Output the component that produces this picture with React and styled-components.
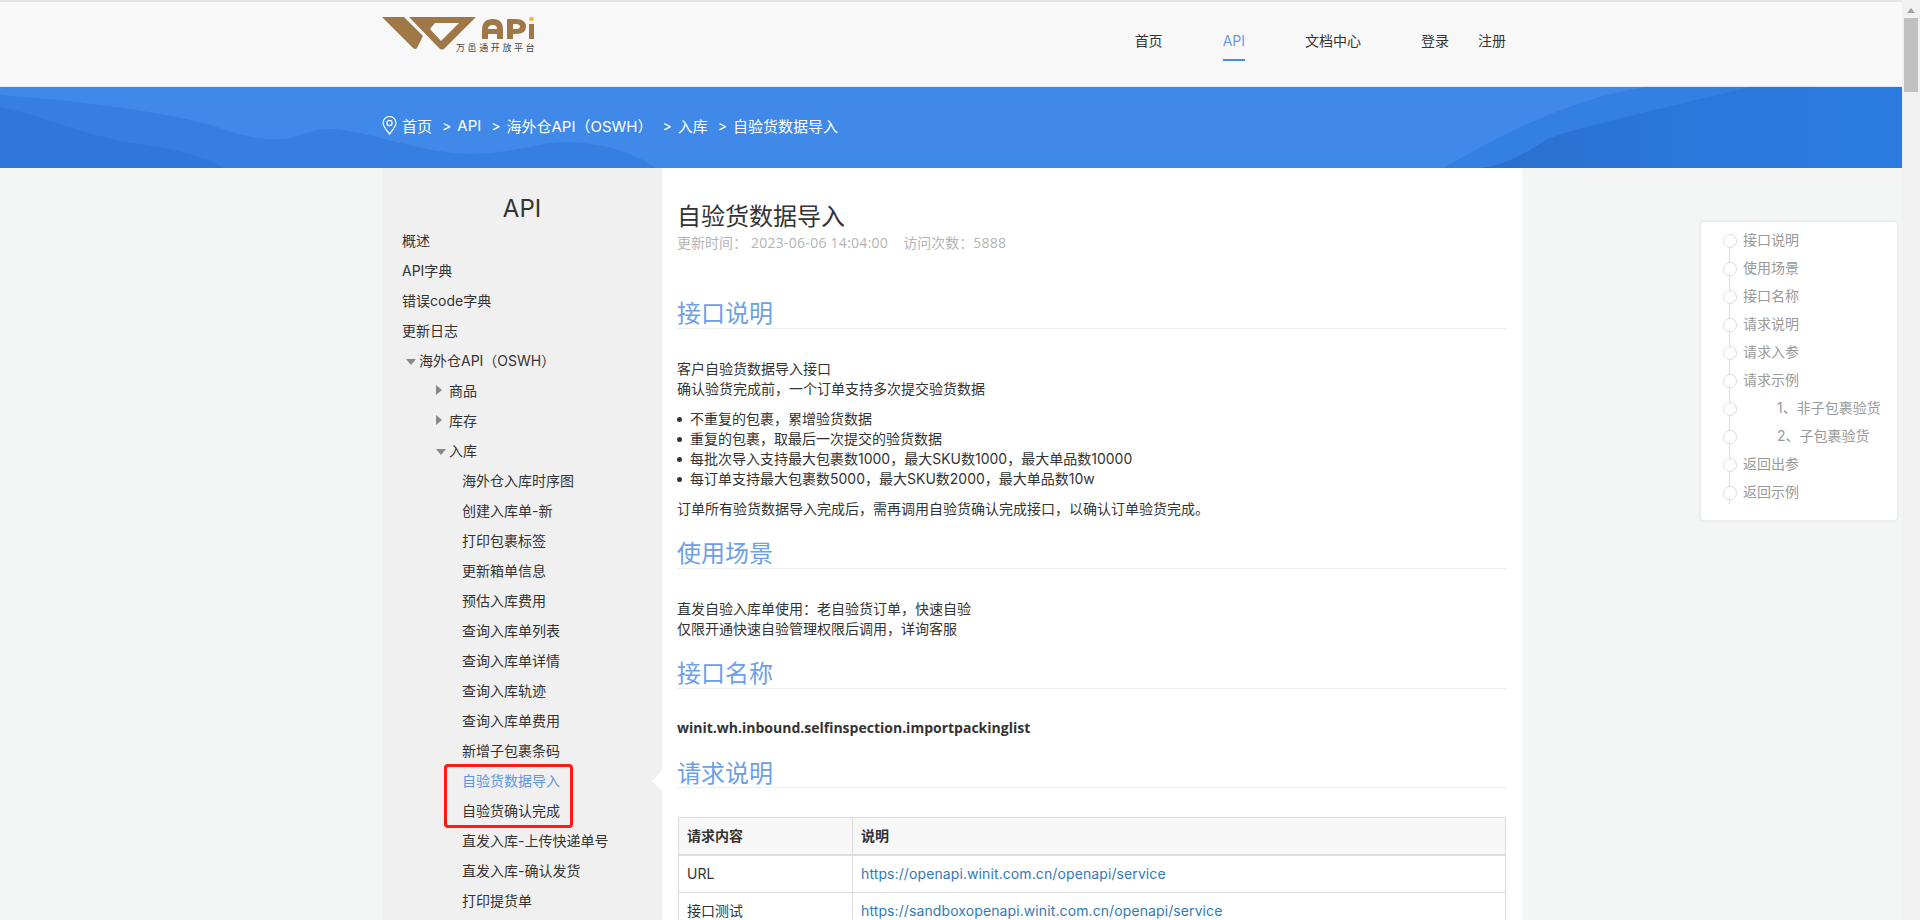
import React from "react";
import styled, { createGlobalStyle } from "styled-components";

const FONT = `Inter, "Noto Sans CJK SC", sans-serif`;
const OPEN = `"Open Sans", "Noto Sans CJK SC", sans-serif`;

const Global = createGlobalStyle`
  html, body { margin: 0; padding: 0; height: 920px; overflow: hidden; background: #f4f6f6; }
  body { font-family: ${FONT}; font-size: 14px; color: #333; }
  * { box-sizing: border-box; }
`;

const Shell = styled.div`display:flex;height:920px;width:1920px;overflow:hidden;`;
const Page = styled.div`flex:1;min-width:0;height:920px;overflow:hidden;`;
const ScrollTrack = styled.div`width:18px;height:920px;background:#f1f1f1;display:flex;flex-direction:column;align-items:center;padding-top:8px;`;
const ScrollArrow = styled.div`width:0;height:0;border-left:4px solid transparent;border-right:4px solid transparent;border-bottom:5px solid #a3a3a3;`;
const ScrollThumb = styled.div`width:14px;height:74px;margin-top:5px;background:#c1c1c1;`;

const Header = styled.header`height:87px;background:#f8f8f8;border-top:2px solid #e4e4e4;border-bottom:1px solid #e6e6e6;`;
const Wrap = styled.div`width:1140px;margin:0 auto;transform:translateX(1px);`;
const HeaderInner = styled(Wrap)`display:flex;justify-content:space-between;height:84px;`;
const LogoBox = styled.div`position:relative;width:160px;height:84px;`;
const LogoArt = styled.svg`position:absolute;left:0;top:15px;`;
const LogoText = styled.span`position:absolute;left:74px;top:40px;font-size:9px;letter-spacing:2.6px;white-space:nowrap;color:#444;line-height:11px;`;
const Nav = styled.nav`display:flex;gap:60px;padding-right:16px;`;
const NavLink = styled.a`position:relative;height:58px;line-height:77px;color:${p=>p.$active?"#6b9be8":"#333"};`;
const NavUnder = styled.i`position:absolute;left:0;right:0;top:57px;height:2px;background:#4a8be4;`;
const AuthLinks = styled.div`display:flex;gap:29px;`;

const Banner = styled.div`position:relative;height:81px;background:#4089e8;overflow:hidden;`;
const BannerArt = styled.svg`position:absolute;left:0;top:0;width:100%;height:100%;`;
const Crumbs = styled(Wrap)`position:relative;display:flex;align-items:center;height:76px;color:#fff;font-size:15px;`;
const PinIcon = styled.svg`width:15px;height:19px;margin-right:5px;`;
const Crumb = styled.span`white-space:pre;`;
const Sep = styled.span`margin:0 6px 0 10px;font-size:14px;`;

const Body = styled(Wrap)`display:flex;position:relative;height:760px;`;
const Side = styled.aside`position:relative;width:280px;background:#f0f0f0;padding:19px 0 0 20px;`;
const SideTitle = styled.h3`margin:0 0 0 -20px;height:37.5px;line-height:44px;font-size:24px;font-weight:400;text-align:center;color:#333;`;
const Item = styled.div`
  display:flex;align-items:center;height:30px;white-space:nowrap;
  padding-left:${p=>p.$indent||0}px;
  color:${p=>p.$active?"#5d95e6":"#333"};
`;
const Tri = styled.i`
  width:0;height:0;margin-right:${p=>p.$mr||0}px;
  ${p=>p.$open
    ?`border-left:5px solid transparent;border-right:5px solid transparent;border-top:6px solid #888;margin-top:4px;`
    :`border-top:5px solid transparent;border-bottom:5px solid transparent;border-left:6px solid #888;`}
`;
const ActiveArrow = styled.i`position:absolute;right:0;top:603px;width:0;height:0;border-top:10px solid transparent;border-bottom:10px solid transparent;border-right:10px solid #fff;`;
const RedMark = styled.div`position:absolute;left:62px;top:596px;width:129px;height:64px;border:3px solid #ff1a12;border-radius:4px;`;

const Main = styled.main`width:860px;background:#fff;padding:32px 16px 0 15px;overflow:hidden;`;
const Title = styled.h1`margin:0;font-size:24px;font-weight:400;line-height:34px;color:#333;`;
const Meta = styled.div`display:flex;gap:15px;line-height:20px;margin-top:-1px;color:#b4b4b4;white-space:pre;`;
const MetaNum = styled.span`font-family:${OPEN};letter-spacing:.27px;`;
const H2 = styled.h2`margin:${p=>p.$mt||0}px 0 0;height:${p=>p.$h||36}px;line-height:42px;font-size:24px;font-weight:400;color:#6c9fe6;border-bottom:1px solid #eee;`;
const Para = styled.p`margin:${p=>p.$mt||0}px 0 0;line-height:20px;color:#333;`;
const Bold = styled(Para)`font-family:${OPEN};font-weight:700;`;
const List = styled.ul`margin:10px 0 0;padding:0 0 0 13px;list-style:none;`;
const Li = styled.li`position:relative;line-height:20px;&::before{content:"";position:absolute;left:-13px;top:8px;width:5px;height:5px;border-radius:50%;background:#333;}`;
const Table = styled.table`width:828px;margin:29px 0 0 1px;border-collapse:collapse;table-layout:fixed;`;
const Th = styled.th`height:37px;padding:8px;text-align:left;font-weight:700;background:#f7f7f7;border:1px solid #ddd;border-bottom:2px solid #ddd;line-height:20px;width:${p=>p.$w||"auto"};`;
const Td = styled.td`height:37px;padding:8px;border:1px solid #ddd;line-height:20px;`;
const LinkA = styled.a`color:#337ab7;letter-spacing:.1px;`;

const Toc = styled.div`position:absolute;left:1317px;top:52px;width:200px;height:302px;background:#fff;border:2px solid #ebedf2;border-radius:5px;padding:4px 0 0 28px;`;
const TocItem = styled.div`position:relative;height:28px;line-height:28px;padding-left:${p=>p.$sub?48:14}px;color:#999;white-space:nowrap;
  &::before{content:"";position:absolute;left:-6px;top:8px;width:12px;height:12px;border-radius:50%;background:#fff;border:1px solid #ddd;z-index:1;}
  &::after{content:"";position:absolute;left:0;top:20px;height:16px;width:1px;background:#ddd;}
  &:last-child::after{height:6px;}
`;

const leaf = ["海外仓入库时序图","创建入库单-新","打印包裹标签","更新箱单信息","预估入库费用","查询入库单列表","查询入库单详情","查询入库轨迹","查询入库单费用","新增子包裹条码","自验货数据导入","自验货确认完成","直发入库-上传快递单号","直发入库-确认发货","打印提货单"];
const toc = [["接口说明"],["使用场景"],["接口名称"],["请求说明"],["请求入参"],["请求示例"],["1、非子包裹验货",1],["2、子包裹验货",1],["返回出参"],["返回示例"]];

function Logo(){
  return (
    <LogoBox>
      <LogoArt width="160" height="36" viewBox="0 0 160 36">
        <g fill="#a07848" fillRule="evenodd">
          <path d="M0 0 H22 L41 19 L35 31 Q33 33 31 31 Z"/>
          <path d="M27 0 H94 L63 31 Q60 34 57 31 Z M53 6 H77 L59 24 L48 12 Z"/>
          <path d="M100 22 V13 Q100 2 111 2 Q121 2 121 13 V22 H115 V17 H106 V22 Z M106 12 H115 Q115 8 111 8 Q106 8 106 12 Z"/>
          <path d="M125 22 V2 H134 Q144 2 144 10 Q144 17 134 17 H131 V22 Z M131 7 V12 H134 Q138 12 138 9.5 Q138 7 134 7 Z"/>
          <rect x="147" y="7" width="5" height="15"/>
        </g>
        <rect x="147" y="0" width="5" height="4" rx="2" fill="#f5b93f"/>
      </LogoArt>
      <LogoText>万邑通开放平台</LogoText>
    </LogoBox>
  );
}

export default function App(){
  return (
    <>
      <Global/>
      <Shell>
        <Page>
          <Header>
            <HeaderInner>
              <Logo/>
              <Nav>
                <NavLink>首页</NavLink>
                <NavLink $active>API<NavUnder/></NavLink>
                <NavLink>文档中心</NavLink>
                <AuthLinks><NavLink>登录</NavLink><NavLink>注册</NavLink></AuthLinks>
              </Nav>
            </HeaderInner>
          </Header>
          <Banner>
            <BannerArt viewBox="0 0 1902 81" preserveAspectRatio="none">
              <defs>
                <linearGradient id="rightWave" x1="0" x2="1" y1="0" y2="0">
                  <stop offset="0" stopColor="#2a70cd"/>
                  <stop offset="0.55" stopColor="#2b78dc"/>
                  <stop offset="1" stopColor="#2b7be0"/>
                </linearGradient>
              </defs>
              <path d="M1444 81 Q1560 12 1646 0 H1902 V81 Z" fill="#3380e2"/>
              <path d="M1480 81 C1510 78 1530 62 1548 52 C1570 42 1660 22 1750 0 H1902 V81 Z" fill="url(#rightWave)"/>
              <path d="M0 8 C80 14 160 24 210 38 C240 48 262 54 285 52 C305 48 312 42 330 42 C370 44 420 66 470 67 C520 66 540 54 570 55 C610 58 635 66 655 81 H0 Z" fill="#367edf"/>
              <path d="M0 20 C40 28 80 46 120 54 C170 62 200 66 223 81 H0 Z" fill="#2f78da"/>
            </BannerArt>
            <Crumbs>
              <PinIcon viewBox="0 0 15 19" fill="none" stroke="#fff" strokeWidth="1.2"><path d="M7.5 18 C3 12.5 1 10 1 7 A6.5 6.5 0 0 1 14 7 C14 10 12 12.5 7.5 18 Z"/><circle cx="7.5" cy="7" r="2.6"/></PinIcon>
              <Crumb>首页</Crumb><Sep>&gt;</Sep>
              <Crumb>API</Crumb><Sep>&gt;</Sep>
              <Crumb>海外仓API（OSWH）</Crumb><Sep>&gt;</Sep>
              <Crumb>入库</Crumb><Sep>&gt;</Sep>
              <Crumb>自验货数据导入</Crumb>
            </Crumbs>
          </Banner>
          <Body>
            <Side>
              <SideTitle>API</SideTitle>
              <Item>概述</Item>
              <Item>API字典</Item>
              <Item>错误code字典</Item>
              <Item>更新日志</Item>
              <Item $indent={4}><Tri $open $mr={3}/>海外仓API（OSWH）</Item>
              <Item $indent={34}><Tri $mr={7}/>商品</Item>
              <Item $indent={34}><Tri $mr={7}/>库存</Item>
              <Item $indent={34}><Tri $open $mr={3}/>入库</Item>
              {leaf.map(t=><Item key={t} $indent={60} $active={t==="自验货数据导入"}>{t}</Item>)}
              <ActiveArrow/>
              <RedMark/>
            </Side>
            <Main>
              <Title>自验货数据导入</Title>
              <Meta><span>更新时间： <MetaNum>2023-06-06 14:04:00</MetaNum></span><span>访问次数：<MetaNum>5888</MetaNum></span></Meta>
              <H2 $mt={40}>接口说明</H2>
              <Para $mt={30}>客户自验货数据导入接口<br/>确认验货完成前，一个订单支持多次提交验货数据</Para>
              <List>
                <Li>不重复的包裹，累增验货数据</Li>
                <Li>重复的包裹，取最后一次提交的验货数据</Li>
                <Li>每批次导入支持最大包裹数1000，最大SKU数1000，最大单品数10000</Li>
                <Li>每订单支持最大包裹数5000，最大SKU数2000，最大单品数10w</Li>
              </List>
              <Para $mt={10}>订单所有验货数据导入完成后，需再调用自验货确认完成接口，以确认订单验货完成。</Para>
              <H2 $mt={14}>使用场景</H2>
              <Para $mt={30}>直发自验入库单使用：老自验货订单，快速自验<br/>仅限开通快速自验管理权限后调用，详询客服</Para>
              <H2 $mt={14}>接口名称</H2>
              <Bold $mt={29}>winit.wh.inbound.selfinspection.importpackinglist</Bold>
              <H2 $mt={15} $h={35}>请求说明</H2>
              <Table>
                <thead><tr><Th $w="174px">请求内容</Th><Th>说明</Th></tr></thead>
                <tbody>
                  <tr><Td>URL</Td><Td><LinkA>https://openapi.winit.com.cn/openapi/service</LinkA></Td></tr>
                  <tr><Td>接口测试</Td><Td><LinkA>https://sandboxopenapi.winit.com.cn/openapi/service</LinkA></Td></tr>
                </tbody>
              </Table>
            </Main>
            <Toc>{toc.map(([t,s])=><TocItem key={t} $sub={s}>{t}</TocItem>)}</Toc>
          </Body>
        </Page>
        <ScrollTrack><ScrollArrow/><ScrollThumb/></ScrollTrack>
      </Shell>
    </>
  );
}
